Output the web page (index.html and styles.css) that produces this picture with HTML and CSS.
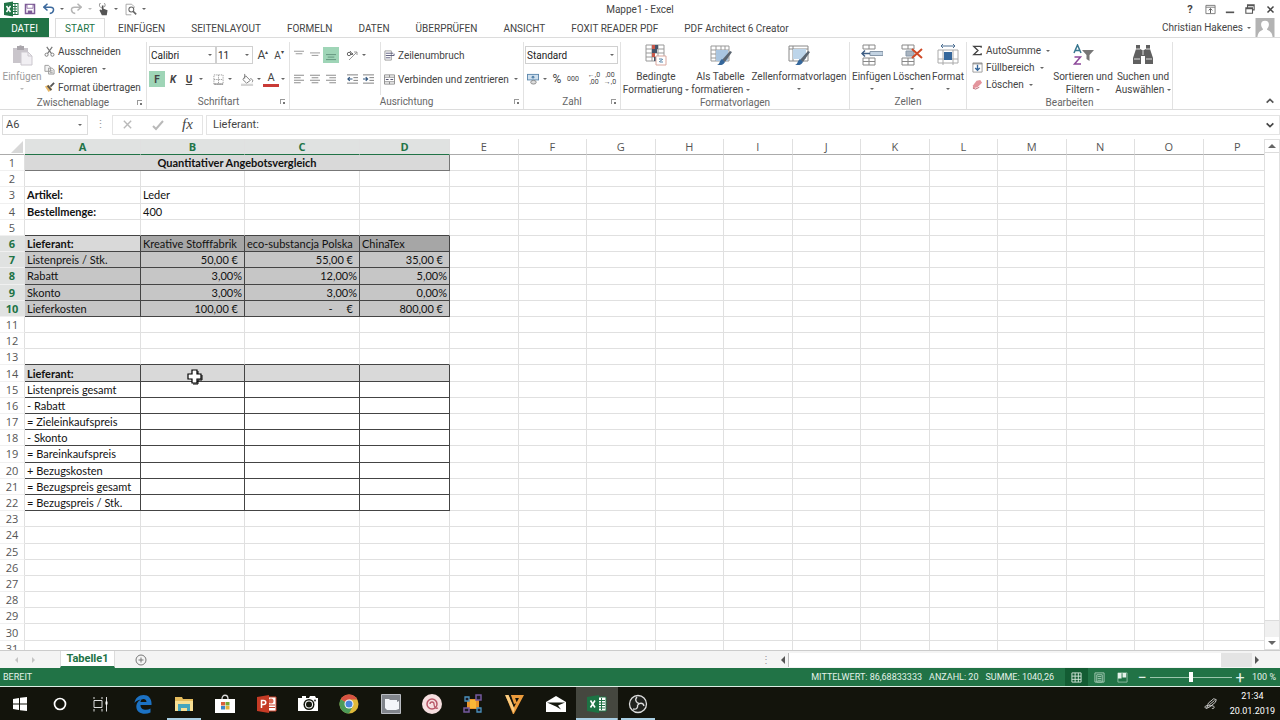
FILE: index.html
```html
<!DOCTYPE html>
<html lang="de">

<head>
    <meta charset="UTF-8">
    <meta name="viewport" content="width=device-width, initial-scale=1.0">
    <title>Mappe1 - Excel</title>
    <link rel="stylesheet" href="styles.css">
</head>

<body>
    <header class="titlebar">
        <div class="quick">
            <svg class="ic w16" viewBox="0 0 16 16"><rect x="8" y="2.500" width="7" height="11" fill="#fff" stroke="#217346"/><path d="M9 5.500h5M9 8h5M9 10.500h5M12 3v10" stroke="#217346"/><path d="M1 2l9-1.500v15L1 14z" fill="#217346"/><path d="M3.500 5l4 6M7.500 5l-4 6" stroke="#fff" stroke-width="1.500"/></svg>
            <button class="tool w20" aria-label="Speichern"><svg class="ic" viewBox="0 0 16 16" width="12" height="12"><path d="M2 2h12v12H2z" fill="#fff" stroke="#7d5a96" stroke-width="2"/><path d="M4 2h8v5H4z" fill="#fff" stroke="#7d5a96"/><path d="M5 10h6v4H5z" fill="#7d5a96"/></svg></button>
            <button class="tool w16" aria-label="Rückgängig"><svg class="ic" viewBox="0 0 16 16" width="12" height="12"><path d="M6 1L1 5.500 6 10M1.500 5.500H10c6 0 5 8-1 8.500" fill="none" stroke="#3d6a9e" stroke-width="2"/></svg></button>
            <button class="tool w8" aria-label="Rückgängig Liste"><i class="arr"></i></button>
            <button class="tool w18" aria-label="Wiederholen"><svg class="ic" viewBox="0 0 16 16" width="12" height="12"><path d="M10 1l5 4.500-5 4.500M14.500 5.500H6c-6 0-5 8 1 8.500" fill="none" stroke="#b5b5b5" stroke-width="2"/></svg></button>
            <button class="tool w8" aria-label="Wiederholen Liste"><i class="arr pale"></i></button>
            <button class="tool w16" aria-label="Fingereingabe"><svg class="ic" viewBox="0 0 16 16" width="13" height="13"><path d="M6 6a3.500 3.500 0 1 1 3-1" fill="none" stroke="#777"/><path d="M6 3v6L4 8l-1 1 3 6h6l1-6-5-2V3z" fill="#555"/></svg></button>
            <button class="tool w8" aria-label="Modus"><i class="arr"></i></button>
            <button class="tool w18" aria-label="Seitenansicht"><svg class="ic" viewBox="0 0 16 16" width="13" height="13"><path d="M9 14.500H2.500v-13h7l3 3V6" fill="none" stroke="#999"/><circle cx="9" cy="8" r="3" fill="#fff" stroke="#666" stroke-width="1.300"/><path d="M11 10l4 4" stroke="#666" stroke-width="2"/></svg></button>
            <button class="tool w8" aria-label="Symbolleiste anpassen"><i class="arr"></i></button>
        </div>
        <div class="title">Mappe1 - Excel</div>
        <div class="window-buttons">
            <button class="tool w20" aria-label="Hilfe"><b>?</b></button>
            <button class="tool w20" aria-label="Menüband-Anzeigeoptionen"><svg class="ic" viewBox="0 0 12 12" width="11" height="11"><path d="M1 1.500h10v9H1zM1 3.500h10" fill="none" stroke="#777"/><path d="M6 10V5M4 7l2-2 2 2" fill="none" stroke="#555"/></svg></button>
            <button class="tool w20" aria-label="Minimieren"><svg class="ic" viewBox="0 0 12 12" width="10" height="10"><path d="M1 10h10" stroke="#555" stroke-width="2"/></svg></button>
            <button class="tool w20" aria-label="Verkleinern"><svg class="ic" viewBox="0 0 12 12" width="10" height="10"><path d="M3 4V1h8v6H9M3 2h8M1 4.500h8V11H1zM1 5.500h8" fill="none" stroke="#555" stroke-width="1.300"/></svg></button>
            <button class="tool w20" aria-label="Schließen"><svg class="ic" viewBox="0 0 12 12" width="9" height="9"><path d="M2 2l8 8M10 2l-8 8" stroke="#444" stroke-width="2"/></svg></button>
        </div>
    </header>

    <nav class="tabs">
        <button class="tab file">DATEI</button>
        <button class="tab active">START</button>
        <button class="tab">EINFÜGEN</button>
        <button class="tab">SEITENLAYOUT</button>
        <button class="tab">FORMELN</button>
        <button class="tab">DATEN</button>
        <button class="tab">ÜBERPRÜFEN</button>
        <button class="tab">ANSICHT</button>
        <button class="tab">FOXIT READER PDF</button>
        <button class="tab">PDF Architect 6 Creator</button>
        <button class="account">Christian Hakenes <i class="arr"></i>
            <svg class="avatar" viewBox="0 0 20 20"><path d="M0 0h20v20H0z" fill="#b3b3b3"/><path d="M10 3c3.500 0 4.500 2.500 4 5-.3 2-1.500 3-2 4 2 1.500 5 1.500 6 8H2c1-6.500 4-6.500 6-8-.5-1-1.700-2-2-4-.5-2.500.5-5 4-5z" fill="#fff"/></svg>
        </button>
    </nav>

    <section class="ribbon">
        <div class="group clipboard">
            <div class="group-body">
                <button class="big disabled"><svg class="ic" viewBox="0 0 22 22"><path d="M2 4h15v15H2z" fill="#c9c5cb"/><path d="M6 2h2a2 2 0 0 1 3 0h2v4H6z" fill="#a9a5ab"/><path d="M10 8h7l4 4v9H10z" fill="#f1eff3" stroke="#cbc7ce"/><path d="M17 8v4h4" fill="none" stroke="#cbc7ce"/></svg><span>Einfügen</span><i class="arr pale"></i></button>
                <div class="stack">
                    <button class="item"><svg class="ic" viewBox="0 0 12 12"><path d="M3 1l5 7M9 1L4 8" stroke="#777" stroke-width="1.300"/><circle cx="2.800" cy="9.500" r="1.700" fill="none" stroke="#777"/><circle cx="9.200" cy="9.500" r="1.700" fill="none" stroke="#777"/></svg>Ausschneiden</button>
                    <button class="item"><svg class="ic" viewBox="0 0 12 12"><path d="M1 1.500h4l2 2V8H1zM5 4.500h4l2 2V11H5z" fill="#f3f3f3" stroke="#999"/><path d="M6.500 7.500h3M6.500 9.500h3" stroke="#999"/></svg>Kopieren <i class="arr"></i></button>
                    <button class="item"><svg class="ic" viewBox="0 0 12 12"><path d="M1 5l4-2 4 5-4 3z" fill="#e7b868"/><path d="M4 4l4 5M7 5l4-4" stroke="#555" stroke-width="2"/></svg>Format übertragen</button>
                </div>
            </div>
            <div class="group-label">Zwischenablage<i class="launch"></i></div>
        </div>

        <div class="group font">
            <div class="group-body rows">
                <div class="row">
                    <label class="combo w66"><select aria-label="Schriftart"><option>Calibri</option></select><i class="arr"></i></label>
                    <label class="combo w38"><select aria-label="Schriftgrad"><option>11</option></select><i class="arr"></i></label>
                    <button class="tool w16 grow">A<sup>▴</sup></button>
                    <button class="tool w16 shrink">A<sup>▾</sup></button>
                </div>
                <div class="row">
                    <button class="tool w16 on"><b>F</b></button>
                    <button class="tool w16"><b><em>K</em></b></button>
                    <button class="tool w16"><b><u>U</u></b></button>
                    <button class="tool w8" aria-label="Unterstreichungsart"><i class="arr"></i></button>
                    <span class="gap"></span>
                    <button class="tool w16" aria-label="Rahmen"><svg class="ic" viewBox="0 0 12 12" width="11" height="11"><path d="M1 1h10v10H1zM6 1v10M1 6h10" fill="none" stroke="#999" stroke-dasharray="1.500 1"/><path d="M1 11h10" stroke="#777"/></svg></button>
                    <button class="tool w8" aria-label="Rahmenart"><i class="arr"></i></button>
                    <span class="gap"></span>
                    <button class="tool w16" aria-label="Füllfarbe"><svg class="ic" viewBox="0 0 14 14" width="13" height="13"><path d="M5 3l5 5-4 3-4-4z" fill="#fff" stroke="#777"/><path d="M4 1v5M10 6c3 1 3 2 2 4" fill="none" stroke="#777"/><path d="M0 11.500h13V14H0z" fill="#d4d4d4"/></svg></button>
                    <button class="tool w8" aria-label="Füllfarbe Liste"><i class="arr"></i></button>
                    <button class="tool w16 fontcolor">A</button>
                    <button class="tool w8" aria-label="Schriftfarbe Liste"><i class="arr"></i></button>
                </div>
            </div>
            <div class="group-label">Schriftart<i class="launch"></i></div>
        </div>

        <div class="group align">
            <div class="group-body">
                <div class="rows">
                    <div class="row">
                        <button class="tool w16" aria-label="Oben"><svg class="ic" viewBox="0 0 12 12" width="10" height="12"><path d="M0 1.500h12M2 4.500h8" stroke="#888"/></svg></button>
                        <button class="tool w16" aria-label="Mitte"><svg class="ic" viewBox="0 0 12 12" width="10" height="12"><path d="M0 3.500h12M2 6.500h8" stroke="#888"/></svg></button>
                        <button class="tool w16 on" aria-label="Unten"><svg class="ic" viewBox="0 0 12 12" width="10" height="12"><path d="M0 5.500h12M2 8.500h8M0 11.500h12" stroke="#5d8d76"/></svg></button>
                        <span class="gap"></span>
                        <button class="tool w16" aria-label="Ausrichtung"><svg class="ic" viewBox="0 0 12 12" width="12" height="12"><path d="M3 11l8-8M11 3H8M11 3v3" fill="none" stroke="#999"/><circle cx="3" cy="5" r="1.700" fill="none" stroke="#666"/><path d="M4 2l3 4M5 6l2-2" stroke="#666"/></svg></button>
                        <button class="tool w8" aria-label="Ausrichtung Liste"><i class="arr"></i></button>
                    </div>
                    <div class="row">
                        <button class="tool w16" aria-label="Links"><svg class="ic" viewBox="0 0 12 12" width="10" height="12"><path d="M0 1.500h12M0 4.500h8M0 7.500h12M0 10.500h8" stroke="#777"/></svg></button>
                        <button class="tool w16" aria-label="Zentriert"><svg class="ic" viewBox="0 0 12 12" width="10" height="12"><path d="M0 1.500h12M2 4.500h8M0 7.500h12M2 10.500h8" stroke="#777"/></svg></button>
                        <button class="tool w16" aria-label="Rechts"><svg class="ic" viewBox="0 0 12 12" width="10" height="12"><path d="M0 1.500h12M4 4.500h8M0 7.500h12M4 10.500h8" stroke="#777"/></svg></button>
                        <span class="gap"></span>
                        <button class="tool w16" aria-label="Einzug verkleinern"><svg class="ic" viewBox="0 0 12 12" width="11" height="12"><path d="M0 1.500h12M7 4.500h5M7 7.500h5M0 10.500h12" stroke="#777"/><path d="M6 6H1M3 4L1 6l2 2" fill="none" stroke="#33577f" stroke-width="1.300"/></svg></button>
                        <button class="tool w16" aria-label="Einzug vergrößern"><svg class="ic" viewBox="0 0 12 12" width="11" height="12"><path d="M0 1.500h12M7 4.500h5M7 7.500h5M0 10.500h12" stroke="#777"/><path d="M0 6h5M3 4l2 2-2 2" fill="none" stroke="#33577f" stroke-width="1.300"/></svg></button>
                    </div>
                </div>
                <div class="rows wrapcol">
                    <button class="item"><svg class="ic" viewBox="0 0 12 12"><path d="M1 1h7v10H1z" fill="#fff" stroke="#999"/><path d="M2 3.500h8M2 6h9V4M2 8.500h5" fill="none" stroke="#557"/></svg>Zeilenumbruch</button>
                    <button class="item"><svg class="ic" viewBox="0 0 12 12"><path d="M.5 1h11v10H.5zM.5 3.500h11M.5 8.500h11M6 1v2.500M6 8.500V11" fill="none" stroke="#888"/><path d="M2 6h3M7 6h3" stroke="#446"/></svg>Verbinden und zentrieren <i class="arr"></i></button>
                </div>
            </div>
            <div class="group-label">Ausrichtung<i class="launch"></i></div>
        </div>

        <div class="group number">
            <div class="group-body rows">
                <div class="row">
                    <label class="combo wide"><select aria-label="Zahlenformat"><option>Standard</option></select><i class="arr"></i></label>
                </div>
                <div class="row">
                    <button class="tool w16" aria-label="Währung"><svg class="ic" viewBox="0 0 13 13" width="12" height="12"><rect x=".5" y="1.500" width="12" height="6" fill="#cfe0ee" stroke="#5b87ad"/><circle cx="6.500" cy="4.500" r="1.500" fill="#5b87ad"/><ellipse cx="7" cy="10" rx="3" ry="2" fill="#ddd" stroke="#888"/></svg></button>
                    <button class="tool w8" aria-label="Währung Liste"><i class="arr"></i></button>
                    <button class="tool w16 percent-sign">%</button>
                    <button class="tool w16 tiny">000</button>
                    <span class="gap"></span>
                    <button class="tool w16 tiny two">←,0<br>,00</button>
                    <button class="tool w16 tiny two">,00<br>→,0</button>
                </div>
            </div>
            <div class="group-label">Zahl<i class="launch"></i></div>
        </div>

        <div class="group styles">
            <div class="group-body">
                <button class="big cond"><svg class="ic" viewBox="0 0 22 22"><path d="M1 1h18v16H1zM1 5h18M1 9h18M1 13h18M7 1v16M13 1v16" fill="#fff" stroke="#999"/><path d="M7 1h3v4H7zM7 9h3v4H7z" fill="#c8584b"/><path d="M7 5h5v4H7zM10 1h3v4h-3zM9 13h4v4H9z" fill="#44546a"/><path d="M11 12h10v9H11z" fill="#fff" stroke="#d9a79e"/><path d="M14 18l4-3M14 15h3M15 18h3" stroke="#5b87ad"/></svg><span>Bedingte<br>Formatierung <i class="arr"></i></span></button>
                <button class="big tabfmt"><svg class="ic" viewBox="0 0 22 22"><path d="M1 2h18v15H1zM1 6h18M1 10h18M1 14h18M6 2v15M11 2v15M15 2v15" fill="#fff" stroke="#999"/><path d="M6 6h12v11H6z" fill="#a9c5e0"/><path d="M20 7l2 1-7 10-3-2z" fill="#5b6570"/><path d="M12 15l3 3c-2 4-5 3-8 3 3-1 2-4 5-6z" fill="#35679b"/></svg><span>Als Tabelle<br>formatieren <i class="arr"></i></span></button>
                <button class="big cellfmt"><svg class="ic" viewBox="0 0 22 22"><path d="M1 2h19v15H1zM1 5h19M5 2v15" fill="#fff" stroke="#888"/><path d="M5 5h13v10H5z" fill="#bdd5ea"/><path d="M20 7l2 1-7 10-3-2z" fill="#5b6570"/><path d="M12 15l3 3c-2 4-5 3-8 3 3-1 2-4 5-6z" fill="#35679b"/></svg><span>Zellenformatvorlagen</span><i class="arr"></i></button>
            </div>
            <div class="group-label">Formatvorlagen</div>
        </div>

        <div class="group cells">
            <div class="group-body">
                <button class="big ins"><svg class="ic" viewBox="0 0 22 22"><path d="M2 1h12v4H2zM8 1v4M2 14h12v7H2zM8 14v7M2 17.500h12" fill="#fff" stroke="#888"/><path d="M9 7.500h13v4H9z" fill="#c3d3e2" stroke="#8797a8"/><path d="M9 9.500H1M4 6.500l-3 3 3 3" fill="none" stroke="#3f5f85" stroke-width="1.500"/></svg><span>Einfügen</span><i class="arr"></i></button>
                <button class="big del"><svg class="ic" viewBox="0 0 22 22"><path d="M1 1h12v4H1zM7 1v4M1 14h12v7H1zM7 14v7M1 17.500h12" fill="#fff" stroke="#888"/><path d="M5 7h8v5H5z" fill="#a9b4c0" stroke="#8797a8"/><path d="M11 5l10 9M21 5l-10 9" stroke="#cf4a27" stroke-width="2"/></svg><span>Löschen</span><i class="arr"></i></button>
                <button class="big fmt"><svg class="ic" viewBox="0 0 22 22"><path d="M4 2h14M6 0L4 2l2 2M16 0l2 2-2 2" fill="none" stroke="#4d6f92"/><path d="M1 6h20v13H1zM1 15h20M6 6v15M16 6v15" fill="#fff" stroke="#aaa"/><path d="M7 8h8v8H7z" fill="#35679b"/></svg><span>Format</span><i class="arr"></i></button>
            </div>
            <div class="group-label">Zellen</div>
        </div>

        <div class="group edit">
            <div class="group-body">
                <div class="stack tight">
                    <button class="item"><svg class="ic" viewBox="0 0 12 12"><path d="M10 3V1.500H2L6.500 6 2 10.500h8V9" fill="none" stroke="#444" stroke-width="1.500"/></svg>AutoSumme <i class="arr"></i></button>
                    <button class="item"><svg class="ic" viewBox="0 0 12 12"><path d="M1 1h10v10H1z" fill="#fff" stroke="#999"/><path d="M1 2h10" stroke="#777"/><path d="M6 3v6M3.500 6.500L6 9l2.500-2.500" fill="none" stroke="#35679b" stroke-width="1.500"/></svg>Füllbereich <i class="arr"></i></button>
                    <button class="item"><svg class="ic" viewBox="0 0 12 12"><path d="M5 2l4-1 2 3-5 5-5 1 0-3z" fill="#e3949c"/><path d="M1 10l3 1 4-2" fill="none" stroke="#b9626e"/></svg>Löschen <i class="arr"></i></button>
                </div>
                <button class="big sort"><svg class="ic" viewBox="0 0 22 22"><path d="M2 9l3.500-8L9 9M3.200 6.500h4.600" fill="none" stroke="#37768f" stroke-width="1.500"/><path d="M2.500 13h6l-6 7h6.500" fill="none" stroke="#8c4799" stroke-width="1.500"/><path d="M10 6h12l-4.500 5v6l-3-2v-4z" fill="#777"/></svg><span>Sortieren und<br>Filtern <i class="arr"></i></span></button>
                <button class="big find"><svg class="ic" viewBox="0 0 22 22"><path d="M4 1h4v4l2 1h2l2-1V1h4v4l3 9v6h-8v-8h-4v8H1v-6l3-9z" fill="#606060"/><path d="M4 5h4M14 5h4M2 15h6M14 15h6M11 6v5" stroke="#ddd"/></svg><span>Suchen und<br>Auswählen <i class="arr"></i></span></button>
            </div>
            <div class="group-label">Bearbeiten</div>
        </div>
        <button class="tool w20 collapse" aria-label="Menüband reduzieren"><svg class="ic" viewBox="0 0 12 12" width="10" height="10"><path d="M2 8l4-4 4 4" fill="none" stroke="#555" stroke-width="2"/></svg></button>
    </section>

    <div class="formula-bar">
        <label class="name-box"><input type="text" value="A6" aria-label="Namenfeld"><i class="arr"></i></label>
        <span class="dots">⋮</span>
        <div class="fx-buttons">
            <button class="tool" aria-label="Abbrechen"><svg class="ic" viewBox="0 0 12 12" width="11" height="11"><path d="M2 2l8 8M10 2l-8 8" stroke="#b9b9b9" stroke-width="1.500"/></svg></button>
            <button class="tool" aria-label="Eingeben"><svg class="ic" viewBox="0 0 12 12" width="12" height="12"><path d="M1 7l3 3 7-8" fill="none" stroke="#b9b9b9" stroke-width="2"/></svg></button>
            <button class="tool fx">fx</button>
        </div>
        <input class="formula" type="text" value="Lieferant:" aria-label="Bearbeitungsleiste">
        <button class="tool w20" aria-label="Erweitern"><svg class="ic" viewBox="0 0 12 12" width="10" height="10"><path d="M2 4l4 4 4-4" fill="none" stroke="#444" stroke-width="2"/></svg></button>
    </div>

    <main class="workspace">
        <div class="sheet">
            <table id="grid">
                <colgroup>
                    <col class="c-head"><col class="c-a"><col class="c-b"><col class="c-c"><col class="c-d">
                </colgroup>
                <thead></thead>
                <tbody></tbody>
            </table>
            <svg class="cursor" viewBox="0 0 16 16"><path d="M5 1h5v4h4v5h-4v4H5v-4H1V5h4z" fill="#fff" stroke="#000" stroke-width="1.200"/><path d="M11 2v3M15 6v5h-4v4H6" fill="none" stroke="#000"/></svg>
        </div>
        <div class="vscroll">
            <button aria-label="Nach oben"><i class="tri up"></i></button>
            <div class="vthumb"></div>
            <button aria-label="Nach unten"><i class="tri down"></i></button>
        </div>
    </main>

    <div class="sheet-bar">
        <button class="nav" aria-label="Vorheriges Blatt"><i class="tri left pale"></i></button>
        <button class="nav" aria-label="Nächstes Blatt"><i class="tri right pale"></i></button>
        <button class="sheet-tab">Tabelle1</button>
        <button class="add" aria-label="Neues Blatt"><svg class="ic" viewBox="0 0 12 12" width="12" height="12"><circle cx="6" cy="6" r="5" fill="none" stroke="#777"/><path d="M6 3.500v5M3.500 6h5" stroke="#777"/></svg></button>
        <div class="hscroll">
            <span class="dots">⋮</span>
            <button aria-label="Nach links"><i class="tri left"></i></button>
            <div class="htrack"></div>
            <button aria-label="Nach rechts"><i class="tri right"></i></button>
        </div>
    </div>

    <footer class="status">
        <span class="ready">BEREIT</span>
        <span>MITTELWERT: 86,68833333</span>
        <span>ANZAHL: 20</span>
        <span>SUMME: 1040,26</span>
        <div class="views">
            <button class="on" aria-label="Normal"><svg class="ic" viewBox="0 0 12 12" width="11" height="11"><path d="M1 1h10v10H1zM4.500 1v10M8 1v10M1 4.500h10M1 8h10" fill="none" stroke="#d5e8dc"/></svg></button>
            <button aria-label="Seitenlayout"><svg class="ic" viewBox="0 0 12 12" width="11" height="11"><path d="M1 1h10v10H1zM3 3h6v8H3zM4 5h4M4 7h4M4 9h4" fill="none" stroke="#a9cdb8"/></svg></button>
            <button aria-label="Umbruchvorschau"><svg class="ic" viewBox="0 0 12 12" width="11" height="11"><path d="M1 1h10v10H1z" fill="none" stroke="#8fbda2"/><path d="M1 1h4v6H1zM6 1h4v5H6z" fill="#e4f2e9"/></svg></button>
        </div>
        <button class="zoomer" aria-label="Verkleinern">−</button>
        <input class="zoom" type="range" min="0" max="100" value="50" aria-label="Zoom">
        <button class="zoomer" aria-label="Vergrößern">+</button>
        <span class="percent">100 %</span>
    </footer>

    <div class="taskbar">
        <div class="system">
            <button aria-label="Start"><svg viewBox="0 0 20 20"><path d="M3 5l6-1v5.500H3zM10 3.800L17 3v6.500h-7zM3 10.500h6V16l-6-1zM10 10.500h7V17l-7-.8z" fill="#fff"/></svg></button>
            <button aria-label="Cortana"><svg viewBox="0 0 20 20"><circle cx="10" cy="10" r="5.500" fill="none" stroke="#fff" stroke-width="1.700"/></svg></button>
            <button aria-label="Aktive Anwendungen"><svg viewBox="0 0 20 20"><path d="M4 6.500h8v7H4zM4 3v2M12 3v2M4 15v2.500M12 15v2.500M16.500 3v14.500" fill="none" stroke="#ddd"/><path d="M15.500 7.500h2v3h-2z" fill="#fff"/></svg></button>
        </div>
        <div class="apps">
            <button aria-label="Edge"><svg viewBox="0 0 20 20"><path d="M1.500 9C2 4 6 1 10.500 1 16 1 19 5 18.500 11H7.500c0 5 6 6 10 3.500v4C10 22 2 18 3.500 11c1-4 4-5.500 5.500-5.500C6 5.500 3 7 1.500 9zM7.500 8h6c0-4-6-4-6 0z" fill="#1c72c4" fill-rule="evenodd"/></svg></button>
            <button class="running" aria-label="Explorer"><svg viewBox="0 0 20 20"><path d="M1 3h7l1 2h10v12H1z" fill="#e5bd5e"/><path d="M1 7h18v10H1z" fill="#f7df94"/><path d="M4 10h12v7h-3v-3H7v3H4z" fill="#45a5bd"/></svg></button>
            <button aria-label="Store"><svg viewBox="0 0 20 20"><path d="M7 5c0-5 6-5 6 0" fill="none" stroke="#ddd" stroke-width="1.300"/><path d="M0 5h20v14H0z" fill="#fff"/><path d="M6 8h4v3.500H6z" fill="#d9603b"/><path d="M10.500 8h4v3.500h-4z" fill="#78a832"/><path d="M6 12h4v3.500H6z" fill="#3c88c9"/><path d="M10.500 12h4v3.500h-4z" fill="#e3b33d"/></svg></button>
            <button aria-label="PowerPoint"><svg viewBox="0 0 20 20"><path d="M9 3h10v14H9z" fill="#fff" stroke="#c8412b"/><path d="M12 11h6M12 13.500h6" stroke="#c8412b"/><circle cx="14" cy="7" r="2.500" fill="#d86550"/><path d="M0 3l12-2v18L0 17z" fill="#c53b25"/><path d="M4.500 14V6.500h2c3 0 3 4 0 4h-2" fill="none" stroke="#fff" stroke-width="1.500"/></svg></button>
            <button aria-label="Kamera"><svg viewBox="0 0 20 20"><path d="M0 4h4V2h4v2h3l1-2h5l1 2h2v13H0z" fill="#fff"/><circle cx="11" cy="10.500" r="5.500" fill="#15180f"/><circle cx="11" cy="10.500" r="4" fill="#fff"/><circle cx="11" cy="10.500" r="3" fill="#15180f"/><circle cx="17" cy="6.500" r="1" fill="#333"/></svg></button>
            <button aria-label="Chrome"><svg viewBox="0 0 20 20"><circle cx="10" cy="10" r="9.500" fill="#dfb93a"/><path d="M10 10L1.800 5.200A9.500 9.500 0 0 0 10 19.500l4-7.500z" fill="#4d9b58"/><path d="M10 10L1.800 5.200A9.500 9.500 0 0 1 18.300 5.500H10z" fill="#d75343"/><circle cx="10" cy="10" r="4.500" fill="#fff"/><circle cx="10" cy="10" r="3.500" fill="#4a86d9"/></svg></button>
            <button aria-label="Ordner"><svg viewBox="0 0 20 20"><path d="M.5.500h19v19H.5z" fill="#81858c" stroke="#b9bcc2"/><path d="M4 5h4l1 1h7v2l2-1v8l-3 1H6l-2-2z" fill="#f4f6fa"/></svg></button>
            <button aria-label="Aufnahme"><svg viewBox="0 0 20 20"><circle cx="10" cy="10" r="10" fill="#f6dfe0"/><circle cx="10" cy="10" r="5" fill="none" stroke="#b85767" stroke-width="1.500"/><path d="M8 10a2 2 0 1 1 4 0c0 3 2 5 4 4" fill="none" stroke="#b85767" stroke-width="1.300"/></svg></button>
            <button aria-label="Bildbearbeitung"><svg viewBox="0 0 20 20"><path d="M4 5h12v10H4z" fill="#e9952a"/><path d="M7 6h6v8H7z" fill="#f8b737"/><path d="M2 3h4v4H2zM14 14h4v4h-4z" fill="#1b1a25" stroke="#4b91bd" stroke-width="1.300"/><path d="M13 1h5v5h-5zM1 14h5v4H1z" fill="#1b1a25" stroke="#755a9d" stroke-width="1.500"/></svg></button>
            <button aria-label="Videobearbeitung"><svg viewBox="0 0 20 20"><path d="M3 1.500l6.500 16L17.500 2.500H9L11.500 9.500" fill="none" stroke="#eb9b3c" stroke-width="3"/><path d="M1 1h3.500l6 14-1 4z" fill="#f9cb80"/></svg></button>
            <button aria-label="Mail"><svg viewBox="0 0 20 20"><path d="M0 8l10-6 10 6v10H0z" fill="#fff"/><path d="M1 8.500h18l-7 3 3 4-5-3z" fill="#15180f"/></svg></button>
            <button class="running focus" aria-label="Excel"><svg viewBox="0 0 20 20"><path d="M10 3h9v14h-9z" fill="#fff" stroke="#217346"/><path d="M11 6.500h7M11 9h7M11 11.500h7M11 14h7M14.500 4v12" stroke="#217346"/><path d="M0 3l12-2v18L0 17z" fill="#1d7344"/><path d="M3.500 6.500l4.500 7M8 6.500l-4.500 7" stroke="#fff" stroke-width="1.600"/></svg></button>
            <button class="running" aria-label="OBS"><svg viewBox="0 0 20 20"><circle cx="10" cy="10" r="8.500" fill="#20221e" stroke="#ddd" stroke-width="1.300"/><path d="M9 3c-3 3 0 6 2 6.500M16 12c-1-4-5-3-6-1M5 15c4 1 5-2 4.500-4.500" fill="none" stroke="#ddd" stroke-width="1.300"/></svg></button>
        </div>
        <div class="tray">
            <svg class="pen" viewBox="0 0 16 16"><path d="M3 13l2-6 6-5 3 1-1 3-6 5zM3 13c-3 0-2-4 1-3h5c4 0 3 4 0 3M6 9l6-5" fill="none" stroke="#ddd"/></svg>
            <div class="clock">21:34<br>20.01.2019</div>
        </div>
    </div>

    <script src="script.js"></script>
</body>

</html>
```
FILE: styles.css
```css
* {
    box-sizing: border-box;
}

body {
    margin: 0;
    height: 100vh;
    display: flex;
    flex-direction: column;
    overflow: hidden;
    background-color: #fff;
    color: #444;
    font-family: Roboto, "Open Sans", sans-serif;
    font-size: 10px;
    line-height: 13px;
}

button,
input,
select {
    margin: 0;
    padding: 0;
    border: none;
    background: none;
    color: inherit;
    font: inherit;
    white-space: nowrap;
}

select {
    appearance: none;
}

svg {
    display: block;
    flex: none;
}

/* small drop-down arrows */
.arr {
    display: inline-block;
    flex: none;
    border: 2px solid transparent;
    border-top-color: #666;
    border-bottom: none;
    vertical-align: middle;
}

.arr.pale {
    border-top-color: #bbb;
}

.tri {
    display: block;
    border: 4px solid transparent;
}

.tri.up {
    border-bottom-color: #666;
    border-top: none;
}

.tri.down {
    border-top-color: #666;
    border-bottom: none;
}

.tri.left {
    border-right-color: #555;
    border-left: none;
}

.tri.right {
    border-left-color: #555;
    border-right: none;
}

.tri.pale {
    border-width: 3px;
    opacity: 0.3;
}

.tool {
    height: 16px;
    flex: none;
    display: flex;
    align-items: center;
    justify-content: center;
}

.tool.on {
    background-color: #9fd5b7;
}

.w8 {
    width: 8px;
}

.w16 {
    width: 16px;
}

.w18 {
    width: 18px;
}

.w20 {
    width: 20px;
}

/* title bar */
.titlebar {
    flex: none;
    height: 18px;
    display: grid;
    grid-template-columns: 1fr auto 1fr;
    align-items: center;
}

.quick,
.window-buttons {
    display: flex;
    align-items: center;
}

.quick {
    gap: 1px;
    padding-left: 3px;
}

.window-buttons {
    justify-content: flex-end;
    font-size: 11px;
}

/* ribbon tabs */
.tabs {
    flex: none;
    height: 20px;
    display: flex;
    align-items: stretch;
    border-bottom: 1px solid #dcdcdc;
}

.tab {
    padding: 1px 13px 0;
}

.tab.file {
    width: 49px;
    padding: 1px 0 0;
    margin-right: 6px;
    background-color: #217346;
    color: #fff;
}

.tab.active {
    width: 50px;
    padding: 0;
    border: 1px solid #dcdcdc;
    border-bottom: none;
    color: #217346;
}

.account {
    display: flex;
    align-items: center;
    gap: 4px;
    margin-left: auto;
    padding-right: 5px;
}

.avatar {
    width: 20px;
    height: 19px;
}

/* ribbon */
.ribbon {
    flex: none;
    height: 72px;
    display: flex;
    padding: 4px 0 0;
    border-bottom: 1px solid #dcdcdc;
}

.group {
    flex: none;
    display: flex;
    flex-direction: column;
    border-right: 1px solid #e2e2e2;
}

.group-body {
    height: 55px;
    display: flex;
}

.group-label {
    position: relative;
    color: #666;
    line-height: 14px;
    text-align: center;
}

.launch {
    position: absolute;
    right: 4px;
    top: 4px;
    width: 5px;
    height: 5px;
    border-top: 1px solid #999;
    border-left: 1px solid #999;
}

.launch::after {
    content: "";
    position: absolute;
    right: 0;
    bottom: 0;
    border: 1px solid #777;
}

.clipboard {
    width: 147px;
}

.font {
    width: 143px;
    padding-left: 1px;
}

.align {
    width: 234px;
}

.number {
    width: 97px;
}

.styles {
    width: 229px;
}

.cells {
    width: 117px;
}

.edit {
    width: 206px;
}

.big {
    flex: none;
    display: flex;
    flex-direction: column;
    align-items: center;
    padding-top: 2px;
    text-align: center;
}

.big .ic {
    width: 22px;
    height: 22px;
    margin-bottom: 4px;
}

.big > .arr {
    margin-top: 5px;
}

.big.disabled {
    width: 44px;
    color: #999;
}

.big.cond {
    width: 70px;
}

.big.tabfmt {
    width: 59px;
}

.big.cellfmt {
    width: 98px;
}

.big.ins {
    width: 43px;
}

.big.del {
    width: 38px;
}

.big.fmt {
    width: 34px;
}

.big.sort {
    width: 64px;
}

.big.find {
    width: 56px;
}

.stack {
    display: flex;
    flex-direction: column;
}

.item {
    height: 18px;
    display: flex;
    align-items: center;
    gap: 3px;
}

.item .ic {
    width: 11px;
    height: 11px;
}

.item .arr {
    margin-left: 2px;
}

.stack.tight {
    width: 84px;
    padding: 0 0 0 5px;
}

.stack.tight .item {
    height: 17px;
}

.rows {
    display: flex;
    flex-direction: column;
    gap: 6px;
    padding: 4px 1px 0;
}

.row {
    display: flex;
    align-items: center;
    height: 18px;
}

.gap {
    width: 5px;
}

.combo {
    display: flex;
    align-items: center;
    height: 18px;
    padding: 0 3px 0 1px;
    border: 1px solid #d0d0d0;
    color: #222;
}

.combo select {
    flex: 1;
    min-width: 0;
}

.w66 {
    width: 67px;
}

.w38 {
    width: 37px;
    margin-right: 2px;
}

.combo.wide {
    width: 93px;
}

.grow {
    font-size: 12px;
}

.tool sup {
    font-size: 6px;
    line-height: 6px;
    margin-bottom: 6px;
}

.fontcolor {
    font-size: 11px;
    line-height: 11px;
    border-bottom: 3px solid #c93a36;
}

.percent-sign {
    font-size: 12px;
}

.tool.tiny {
    font-size: 7px;
    line-height: 7px;
}

.wrapcol {
    margin-left: 3px;
    padding-left: 3px;
    border-left: 1px solid #e2e2e2;
}

.collapse {
    margin: auto 0 0 auto;
}

/* formula bar */
.formula-bar {
    flex: none;
    height: 29px;
    display: flex;
    align-items: center;
    padding-left: 2px;
    font-size: 11px;
}

.name-box {
    width: 86px;
    height: 20px;
    display: flex;
    align-items: center;
    padding: 0 5px 0 3px;
    border: 1px solid #dcdcdc;
}

.name-box input {
    flex: 1;
    min-width: 0;
}

.dots {
    width: 24px;
    color: #999;
    text-align: center;
}

.fx-buttons {
    width: 91px;
    height: 20px;
    display: flex;
    align-items: center;
    justify-content: space-around;
    border: 1px solid #e4e4e4;
}

.fx {
    font-family: "Liberation Serif", serif;
    font-size: 15px;
    font-style: italic;
}

.formula {
    flex: 1;
    height: 20px;
    margin-left: 3px;
    padding-left: 6px;
    border: 1px solid #e4e4e4;
}

.formula-bar > .tool {
    margin-left: -20px;
}

/* worksheet */
.workspace {
    flex: 1;
    min-height: 0;
    display: flex;
}

.sheet {
    position: relative;
    flex: 1;
    overflow: hidden;
}

#grid {
    width: calc(100% + 8px);
    height: 518px;
    table-layout: fixed;
    border-collapse: separate;
    border-spacing: 0;
    color: #111;
    font-family: Lato, "Open Sans", sans-serif;
    font-size: 11px;
    line-height: 14px;
}

.c-head {
    width: 25px;
}

.c-a {
    width: 116px;
}

.c-b {
    width: 104px;
}

.c-c {
    width: 115px;
}

.c-d {
    width: 90px;
}

#grid th,
#grid td {
    padding: 1px 2px 0;
    border-right: 1px solid #e0e0e0;
    border-bottom: 1px solid #e0e0e0;
    white-space: nowrap;
    overflow: hidden;
}

#grid th {
    color: #555;
    font-family: "Open Sans", sans-serif;
    font-weight: normal;
    text-align: center;
}

#grid thead th {
    border-bottom-color: #ababab;
}

#grid tbody th {
    padding: 1px 0 0;
    border-bottom-color: #f0f0f0;
}

#grid .corner {
    padding: 0;
    border-right-color: #fff;
}

.corner::after {
    content: "";
    display: block;
    width: 0;
    margin-left: 11px;
    border: 6px solid #d8d8d8;
    border-top-color: transparent;
    border-left-color: transparent;
}

#grid th.selected {
    background-color: #e0e2e1;
    color: #217346;
    font-weight: bold;
}

#grid thead th.selected {
    border-bottom-color: #217346;
}

#grid td.boxed {
    border-right-color: #444;
    border-bottom-color: #444;
}

#grid td.below {
    border-bottom-color: #444;
}

#grid td.soft {
    border-color: #777;
}

#grid .head {
    background-color: #d9d9d9;
}

#grid .sel {
    background-color: #c6c6c6;
}

#grid .sel-head {
    background-color: #a6a6a6;
}

#grid .bold {
    font-weight: bold;
}

#grid .center {
    text-align: center;
}

#grid .num {
    text-align: right;
}

#grid .money {
    padding-right: 6px;
    text-align: right;
    white-space: pre;
}

/* green edge of the selected range */
#grid .edge-right {
    border-right-color: #217346;
}

#grid .edge-bottom {
    border-bottom-color: #217346;
}

.cursor {
    position: absolute;
    left: 187px;
    top: 230px;
    width: 16px;
    height: 16px;
}

.vscroll {
    width: 16px;
    display: flex;
    flex-direction: column;
    border: 1px solid #e0e0e0;
    background-color: #f0f0f0;
}

.vscroll button {
    height: 12px;
    display: flex;
    align-items: center;
    justify-content: center;
    background-color: #fff;
}

.vthumb {
    flex: 1;
    margin-bottom: 16px;
    border: 1px solid #dcdcdc;
    border-width: 1px 0;
    background-color: #fff;
}

/* sheet tabs */
.sheet-bar {
    flex: none;
    height: 18px;
    display: flex;
    align-items: center;
    padding-left: 8px;
    border-top: 1px solid #ccc;
    background-color: #f4f4f4;
}

.nav {
    width: 17px;
    display: flex;
    justify-content: center;
}

.sheet-tab {
    height: 17px;
    width: 55px;
    margin: 0 20px 0 18px;
    border: 1px solid #dcdcdc;
    border-top: none;
    border-bottom: 2px solid #217346;
    background-color: #fff;
    color: #217346;
    font-size: 11px;
    font-weight: bold;
}

.hscroll {
    width: 526px;
    height: 14px;
    margin-left: auto;
    padding-right: 18px;
    display: flex;
    align-items: center;
}

.hscroll button {
    width: 10px;
    display: flex;
    justify-content: center;
}

.htrack {
    flex: 1;
    height: 14px;
    border-left: 1px solid #bbb;
    border-right: 31px solid #e4e4e4;
    background-color: #fff;
}

/* status bar */
.status {
    flex: none;
    height: 19px;
    display: flex;
    align-items: center;
    gap: 7px;
    padding: 0 4px 0 3px;
    border-bottom: 1px solid #dceee3;
    background-color: #217346;
    color: #e4f2e9;
    font-size: 9px;
}

.ready {
    margin-right: auto;
}

.views {
    display: flex;
    margin-left: 4px;
}

.views button {
    width: 23px;
    height: 18px;
    display: flex;
    align-items: center;
    justify-content: center;
}

.views .on {
    background-color: #135c33;
}

.zoomer {
    width: 10px;
    margin: 0 -4px;
    font-size: 16px;
}

.zoom {
    appearance: none;
    width: 82px;
    height: 12px;
    background: linear-gradient(#9cc6ad, #9cc6ad) center / 100% 1px no-repeat;
}

.zoom::-webkit-slider-thumb {
    appearance: none;
    width: 4px;
    height: 10px;
    background-color: #fff;
}

.percent {
    margin-left: 4px;
}

/* task bar */
.taskbar {
    flex: none;
    height: 33px;
    display: flex;
    background-color: #13140c;
    color: #fff;
}

.system,
.apps {
    display: flex;
}

.system {
    width: 120px;
    margin-right: 2px;
}

.apps {
    width: 537px;
}

.taskbar button {
    flex: 1;
    display: flex;
    align-items: center;
    justify-content: center;
}

.taskbar button svg {
    width: 20px;
    height: 20px;
}

.taskbar .running {
    background: linear-gradient(#a9cfe4, #a9cfe4) bottom / 34px 2px no-repeat;
}

.taskbar .focus {
    background-color: #45473f;
    background-size: 100% 2px;
}

.tray {
    display: flex;
    align-items: center;
    gap: 12px;
    margin-left: auto;
    padding-right: 5px;
}

.pen {
    width: 14px;
    height: 14px;
}

.clock {
    font-size: 9px;
    line-height: 15px;
    text-align: center;
}
```
FILE: script.js
```js
const columns = ["A", "B", "C", "D", "E", "F", "G", "H", "I", "J", "K", "L", "M", "N", "O", "P"];

// cell texts by row number
const data = {
    3: ["Artikel:", "Leder"],
    4: ["Bestellmenge:", "400"],
    6: ["Lieferant:", "Kreative Stofffabrik", "eco-substancja Polska", "ChinaTex"],
    7: ["Listenpreis / Stk.", "50,00 €", "55,00 €", "35,00 €"],
    8: ["Rabatt", "3,00%", "12,00%", "5,00%"],
    9: ["Skonto", "3,00%", "3,00%", "0,00%"],
    10: ["Lieferkosten", "100,00 €", "-     €", "800,00 €"],
    14: ["Lieferant:"],
    15: ["Listenpreis gesamt"],
    16: ["- Rabatt"],
    17: ["= Zieleinkaufspreis"],
    18: ["- Skonto"],
    19: ["= Bareinkaufspreis"],
    20: ["+ Bezugskosten"],
    21: ["= Bezugspreis gesamt"],
    22: ["= Bezugspreis / Stk."]
};

const thead = document.querySelector("#grid thead");
const tbody = document.querySelector("#grid tbody");

function addCell(row, tag, text, classes) {
    const cell = document.createElement(tag);
    cell.textContent = text;
    cell.className = classes.join(" ");
    row.appendChild(cell);
    return cell;
}

function cellClasses(r, c) {
    const classes = [];
    if (c > 3) return classes;
    if ((r >= 6 && r <= 10) || (r >= 14 && r <= 22)) classes.push("boxed");
    if (r === 5 || r === 13) classes.push("below");
    if (r === 14) classes.push("head");
    if (r >= 6 && r <= 10) {
        if (r === 6) classes.push(c === 0 ? "head" : "sel-head");
        else classes.push("sel");
        if (c === 3) classes.push("edge-right");
        if (r === 10) classes.push("edge-bottom");
    }
    if (c === 0 && [3, 4, 6, 14].includes(r)) classes.push("bold");
    if (c > 0 && (r === 7 || r === 10)) classes.push("money");
    if (c > 0 && (r === 8 || r === 9)) classes.push("num");
    return classes;
}

const headRow = document.createElement("tr");
addCell(headRow, "th", "", ["corner"]);
columns.forEach((name, c) => addCell(headRow, "th", name, c < 4 ? ["selected"] : []));
thead.appendChild(headRow);

for (let r = 1; r <= 31; r++) {
    const row = document.createElement("tr");
    addCell(row, "th", r, r >= 6 && r <= 10 ? ["selected"] : []);
    columns.forEach((name, c) => {
        if (r === 1 && c < 4) {
            // title is merged over A1:D1
            if (c === 0) addCell(row, "td", "Quantitativer Angebotsvergleich", ["boxed", "soft", "head", "bold", "center"]).colSpan = 4;
            return;
        }
        const text = data[r] && data[r][c] ? data[r][c] : "";
        addCell(row, "td", text, cellClasses(r, c));
    });
    tbody.appendChild(row);
}
```
